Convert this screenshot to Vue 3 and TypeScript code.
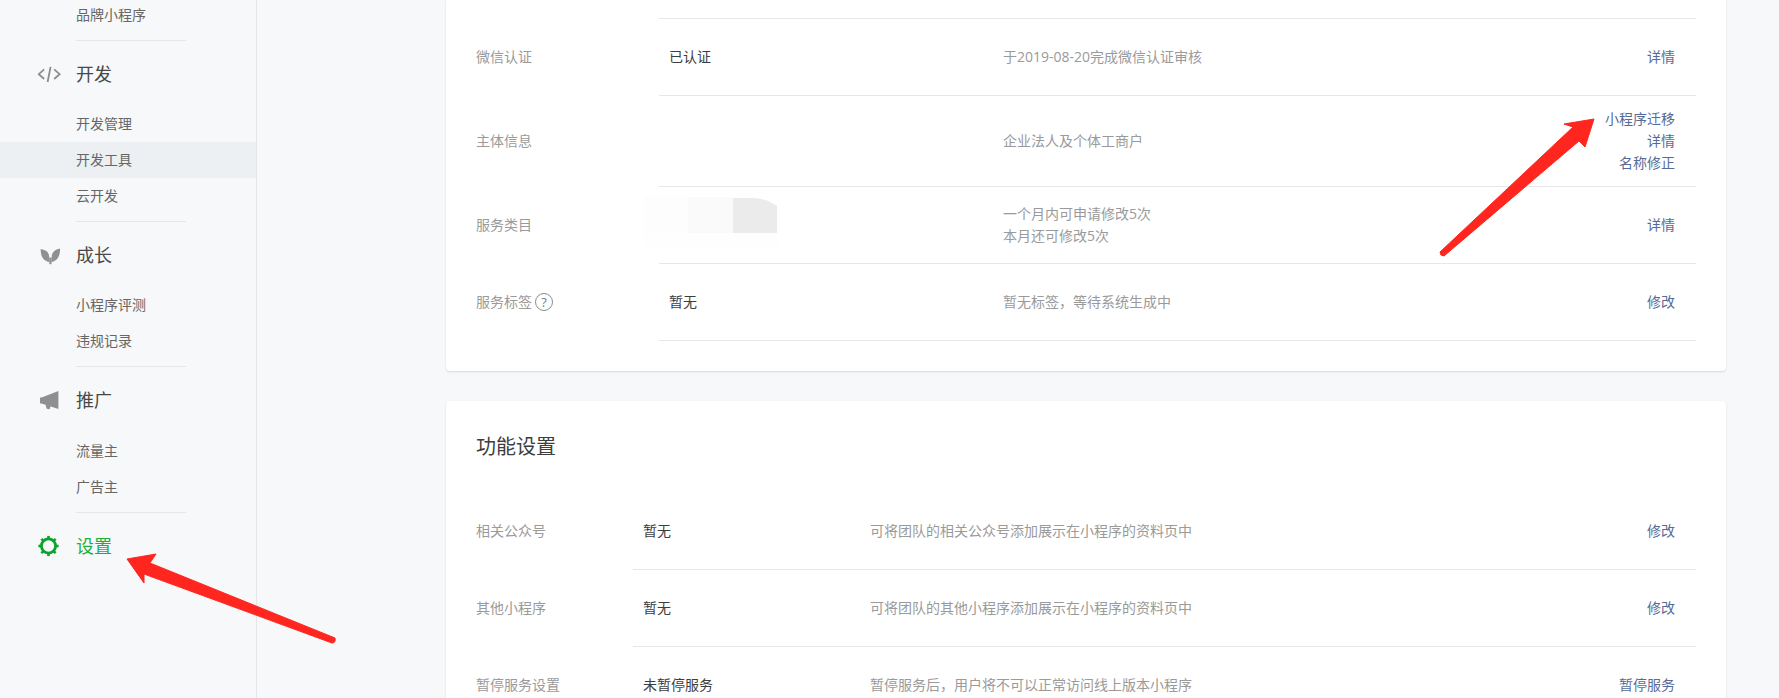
<script setup lang="ts">
interface NavGroup {
  title?: string
  icon?: string
  items: string[]
}

interface InfoRow {
  label: string
  value?: string
  desc: string[]
  actions: string[]
  tip?: boolean
  tall?: boolean
}

const nav: NavGroup[] = [
  { items: ['品牌小程序'] },
  { title: '开发', icon: 'code', items: ['开发管理', '开发工具', '云开发'] },
  { title: '成长', icon: 'sprout', items: ['小程序评测', '违规记录'] },
  { title: '推广', icon: 'horn', items: ['流量主', '广告主'] }
]

const accountRows: InfoRow[] = [
  { label: '微信认证', value: '已认证', desc: ['于2019-08-20完成微信认证审核'], actions: ['详情'] },
  { label: '主体信息', desc: ['企业法人及个体工商户'], actions: ['小程序迁移', '详情', '名称修正'], tall: true },
  { label: '服务类目', desc: ['一个月内可申请修改5次', '本月还可修改5次'], actions: ['详情'] },
  { label: '服务标签', value: '暂无', desc: ['暂无标签，等待系统生成中'], actions: ['修改'], tip: true }
]

const featureRows: InfoRow[] = [
  { label: '相关公众号', value: '暂无', desc: ['可将团队的相关公众号添加展示在小程序的资料页中'], actions: ['修改'] },
  { label: '其他小程序', value: '暂无', desc: ['可将团队的其他小程序添加展示在小程序的资料页中'], actions: ['修改'] },
  { label: '暂停服务设置', value: '未暂停服务', desc: ['暂停服务后，用户将不可以正常访问线上版本小程序'], actions: ['暂停服务'] }
]

const gearTeeth = [0, 45, 90, 135, 180, 225, 270, 315]
</script>

<template>
  <div class="page">
    <aside class="sidebar">
      <section v-for="group in nav" :key="group.items[0]" class="group">
        <h3 v-if="group.title" class="group-title">
          <svg class="nav-icon" viewBox="0 0 24 24" aria-hidden="true">
            <g v-if="group.icon === 'code'" fill="none" stroke="#8d8d8d" stroke-width="1.8">
              <path d="M7.2 7.4 1.8 12.2l5.4 4.8" />
              <path d="M17.2 7.4l5.4 4.8-5.4 4.8" />
              <path d="M13.6 4.8 10.6 20" />
            </g>
            <g v-else-if="group.icon === 'sprout'" fill="#909090">
              <path d="M3.7 6C7.6 6.6 10.8 8.4 11.8 11.4c.5 2 .6 4.8.5 7.6C6.6 18 3.4 13.6 3.7 6z" />
              <path d="M23 5.4c-3.9.8-7 2.8-7.9 5.8-.5 2-.7 5-.6 7.8 5.7-1 8.8-5.6 8.5-13.6z" />
              <path d="M12.3 14.5h2.2v6.7h-2.2z" />
            </g>
            <g v-else fill="#8f8f8f">
              <path d="M3 9.4h1.6L21.4 3v18L4.6 15.6H3z" />
              <path d="M8.6 16.6 13.6 18l-1 3.2-3-.4z" />
            </g>
          </svg>
          <span>{{ group.title }}</span>
        </h3>
        <a
          v-for="item in group.items"
          :key="item"
          class="nav-item"
          :class="{ active: item === '开发工具' }"
        >{{ item }}</a>
      </section>
      <h3 class="group-title setting">
        <svg class="nav-icon" viewBox="0 0 24 24" aria-hidden="true">
          <circle cx="11.5" cy="12" r="7.1" fill="none" stroke="#0ba32c" stroke-width="2.8" />
          <rect
            v-for="deg in gearTeeth"
            :key="deg"
            x="10.2" y="1.9" width="2.6" height="2.6"
            fill="#0ba32c"
            :transform="`rotate(${deg} 11.5 12)`"
          />
        </svg>
        <span>设置</span>
      </h3>
    </aside>

    <main class="main">
      <section class="card account">
        <div class="row-clip"></div>
        <div v-for="row in accountRows" :key="row.label" class="row" :class="{ tall: row.tall }">
          <div class="label">
            {{ row.label }}<i v-if="row.tip" class="tip">?</i>
          </div>
          <div class="body">
            <div class="value">{{ row.value }}</div>
            <div class="desc">
              <p v-for="line in row.desc" :key="line">{{ line }}</p>
            </div>
            <div class="actions">
              <a v-for="action in row.actions" :key="action">{{ action }}</a>
            </div>
          </div>
        </div>
      </section>

      <section class="card feature">
        <h2 class="card-title">功能设置</h2>
        <div v-for="row in featureRows" :key="row.label" class="row">
          <div class="label">{{ row.label }}</div>
          <div class="body">
            <div class="value">{{ row.value }}</div>
            <div class="desc">
              <p v-for="line in row.desc" :key="line">{{ line }}</p>
            </div>
            <div class="actions">
              <a v-for="action in row.actions" :key="action">{{ action }}</a>
            </div>
          </div>
        </div>
      </section>
    </main>

    <!-- blurred-out category, lies over the row -->
    <svg class="mask" viewBox="0 0 134 53" aria-hidden="true">
      <rect x="0" y="37" width="134" height="16" fill="#fefefe" />
      <rect x="0" y="1" width="44" height="36" fill="#fdfdfd" />
      <path d="M44 1h34l11 1v35H44z" fill="#fafafa" />
      <path d="M89 2h22c8 1 15 3 22 8v27H89z" fill="#ebebeb" />
    </svg>

    <!-- red annotation arrows drawn on top of the screenshot -->
    <svg class="arrows" viewBox="0 0 1779 698" aria-hidden="true">
      <path
        fill="#fe261f"
        stroke="#fe261f"
        stroke-width="1"
        stroke-linejoin="round"
        d="M127 559 156 554 150 563 335 638Q336 643 332 643L144 574 144 583Z"
      />
      <path
        fill="#fe261f"
        stroke="#fe261f"
        stroke-width="1"
        stroke-linejoin="round"
        d="M1594 119 1564 124 1573 127 1440 252Q1440 256 1444 256L1579 141 1585 147Z"
      />
    </svg>
  </div>
</template>

<style scoped>
.page {
  position: relative;
  display: flex;
  width: 1779px;
  height: 698px;
  overflow: hidden;
  background: #f6f8f9;
  font-family: 'Open Sans', 'Noto Sans CJK SC', sans-serif;
  font-size: 14px;
  line-height: 22px;
  color: #3d3d3d;
}

/* sidebar */
.sidebar {
  flex: none;
  width: 256px;
  margin-top: -3px;
  border-right: 1px solid #e4e8eb;
}
.group::after {
  content: '';
  display: block;
  width: 110px;
  height: 1px;
  margin: 7px 0 0 76px;
  background: #e4e8eb;
}
.group-title {
  display: flex;
  align-items: center;
  height: 65px;
  margin: 0;
  padding-left: 37px;
  font-size: 18px;
  font-weight: 400;
  line-height: 24px;
  color: #484848;
}
.group:last-of-type .group-title {
  height: 66px;
}
.nav-icon {
  width: 24px;
  height: 24px;
  margin-right: 15px;
}
.nav-item {
  display: block;
  height: 36px;
  padding-left: 76px;
  line-height: 35px;
  color: #666;
}
.nav-item.active {
  background: #ecf0f2;
}
.group-title.setting {
  color: #1cb041;
}

/* cards */
.main {
  flex: 1;
  min-width: 0;
  padding: 0 53px 0 189px;
}
.card {
  padding: 0 30px 30px;
  background: #fff;
  border-radius: 0 0 4px 4px;
  box-shadow: 0 1px 2px rgba(150, 150, 150, 0.3);
}
.feature {
  margin-top: 30px;
  border-radius: 4px 4px 0 0;
}
.row-clip {
  height: 18px;
  margin-left: 183px;
  border-bottom: 1px solid #e7e7eb;
}
.card-title {
  height: 92px;
  margin: 0;
  font-size: 20px;
  font-weight: 400;
  line-height: 92px;
}
.row {
  display: flex;
}
.label {
  display: flex;
  align-items: center;
  flex: none;
  box-sizing: border-box;
  padding-bottom: 1px;
  color: #9a9a9a;
}
.account .label {
  width: 183px;
}
.feature .label {
  width: 157px;
}
.tip {
  display: block;
  width: 16px;
  height: 16px;
  margin-left: 3px;
  border: 1px solid #8d8d8d;
  border-radius: 50%;
  font-size: 13px;
  font-style: normal;
  line-height: 16px;
  text-align: center;
  color: #7a7a7a;
}
.body {
  display: flex;
  align-items: center;
  flex: 1;
  box-sizing: border-box;
  height: 77px;
  border-bottom: 1px solid #e7e7eb;
}
.row.tall .body {
  height: 91px;
}
.value {
  flex: none;
  box-sizing: border-box;
  padding-left: 10px;
}
.account .value {
  width: 344px;
}
.feature .value {
  width: 237px;
}
.desc {
  flex: 1;
  color: #9a9a9a;
}
.desc p {
  margin: 0;
}
.actions {
  display: flex;
  flex-direction: column;
  align-items: flex-end;
  padding-right: 21px;
  color: #576b95;
}

/* overlays */
.mask {
  position: absolute;
  left: 644px;
  top: 196px;
  width: 134px;
  height: 53px;
}
.arrows {
  position: absolute;
  left: 0;
  top: 0;
  width: 1779px;
  height: 698px;
  pointer-events: none;
}
</style>
